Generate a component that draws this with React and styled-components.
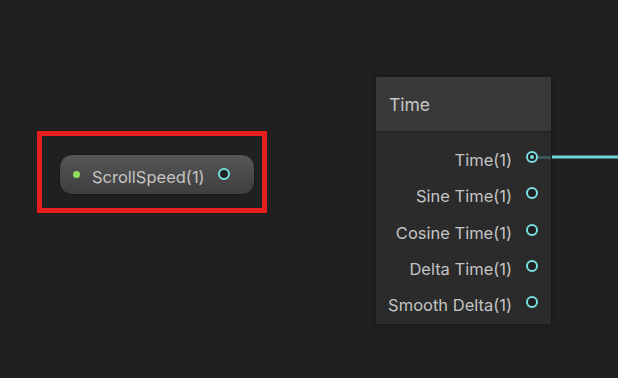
import styled, { createGlobalStyle } from "styled-components";

const GlobalStyle = createGlobalStyle`
    html, body {
        margin: 0;
        padding: 0;
        background: #202020;
    }
    body {
        font-family: Inter, "Noto Sans", "Liberation Sans", sans-serif;
    }
`;

const ports = [
    { label: "Time(1)", connected: true },
    { label: "Sine Time(1)" },
    { label: "Cosine Time(1)" },
    { label: "Delta Time(1)" },
    { label: "Smooth Delta(1)" },
];

const App = function () {
    return (
        <>
            <GlobalStyle />
            <Canvas>
                <Highlight>
                    <PropertyPill>
                        <InputDot />
                        <PillLabel>ScrollSpeed(1)</PillLabel>
                        <Port />
                    </PropertyPill>
                </Highlight>

                <Node>
                    <NodeHeader>Time</NodeHeader>
                    <NodeBody>
                        {ports.map((p) => (
                            <PortRow key={p.label}>
                                <PortLabel>{p.label}</PortLabel>
                                <Port $connected={p.connected} />
                                {p.connected && <Stub />}
                            </PortRow>
                        ))}
                    </NodeBody>
                </Node>

                <Wire width="618" height="378">
                    <line x1="552" y1="157" x2="618" y2="157" stroke="#6fd6d8" strokeWidth="3" />
                </Wire>
            </Canvas>
        </>
    );
};

export default App;

const Canvas = styled.div`
    position: relative;
    width: 618px;
    height: 378px;
    overflow: hidden;
    background: #202020;
`;

const Highlight = styled.div`
    position: absolute;
    left: 37px;
    top: 131px;
    width: 230px;
    height: 82px;
    box-sizing: border-box;
    border: 5px solid #e41d1d;
    display: flex;
    align-items: flex-start;
    padding-left: 17px;
    padding-top: 18px;
`;

const PropertyPill = styled.div`
    width: 196px;
    height: 41px;
    box-sizing: border-box;
    border-radius: 13px;
    border: 1px solid #1a1a1a;
    background: linear-gradient(#565656, #3e3e3e);
    display: flex;
    align-items: center;
    padding-left: 13px;
    padding-right: 24px;
    padding-bottom: 1px;
`;

const InputDot = styled.span`
    width: 7px;
    height: 7px;
    border-radius: 50%;
    background: #8fe05a;
    flex-shrink: 0;
`;

const PillLabel = styled.span`
    flex: 1;
    margin-left: 12px;
    position: relative;
    top: 3px;
    font-size: 16.5px;
    color: #c4c4c4;
    white-space: nowrap;
`;

const Port = styled.span`
    position: relative;
    width: 12px;
    height: 12px;
    box-sizing: border-box;
    border-radius: 50%;
    border: 2px solid #7adfe2;
    background: #1f1f1f;
    flex-shrink: 0;

    &::after {
        content: "";
        display: ${(props) => (props.$connected ? "block" : "none")};
        position: absolute;
        left: 2px;
        top: 2px;
        width: 4px;
        height: 4px;
        border-radius: 50%;
        background: #7adfe2;
    }
`;

const Node = styled.div`
    position: absolute;
    left: 376px;
    top: 77px;
    width: 175px;
    height: 247px;
    background: #2b2b2b;
    box-shadow: 0 0 0 1px #1a1a1a, 0 0 4px rgba(0, 0, 0, 0.5);
    display: flex;
    flex-direction: column;
`;

const NodeHeader = styled.div`
    height: 54px;
    background: #393939;
    border-bottom: 2px solid #232323;
    display: flex;
    align-items: center;
    padding-left: 13px;
    font-size: 17.5px;
    color: #c8c8c8;
`;

const NodeBody = styled.div`
    padding-top: 6px;
    display: flex;
    flex-direction: column;
`;

const PortRow = styled.div`
    position: relative;
    height: 36.3px;
    display: flex;
    align-items: center;
    justify-content: flex-end;
    padding-right: 13px;
    gap: 14px;
`;

const PortLabel = styled.span`
    position: relative;
    top: 3px;
    font-size: 16.5px;
    color: #c4c4c4;
    white-space: nowrap;
`;

const Stub = styled.span`
    position: absolute;
    right: 0;
    top: 17px;
    width: 13px;
    height: 3px;
    background: #3b5656;
`;

const Wire = styled.svg`
    position: absolute;
    left: 0;
    top: 0;
    pointer-events: none;
`;
